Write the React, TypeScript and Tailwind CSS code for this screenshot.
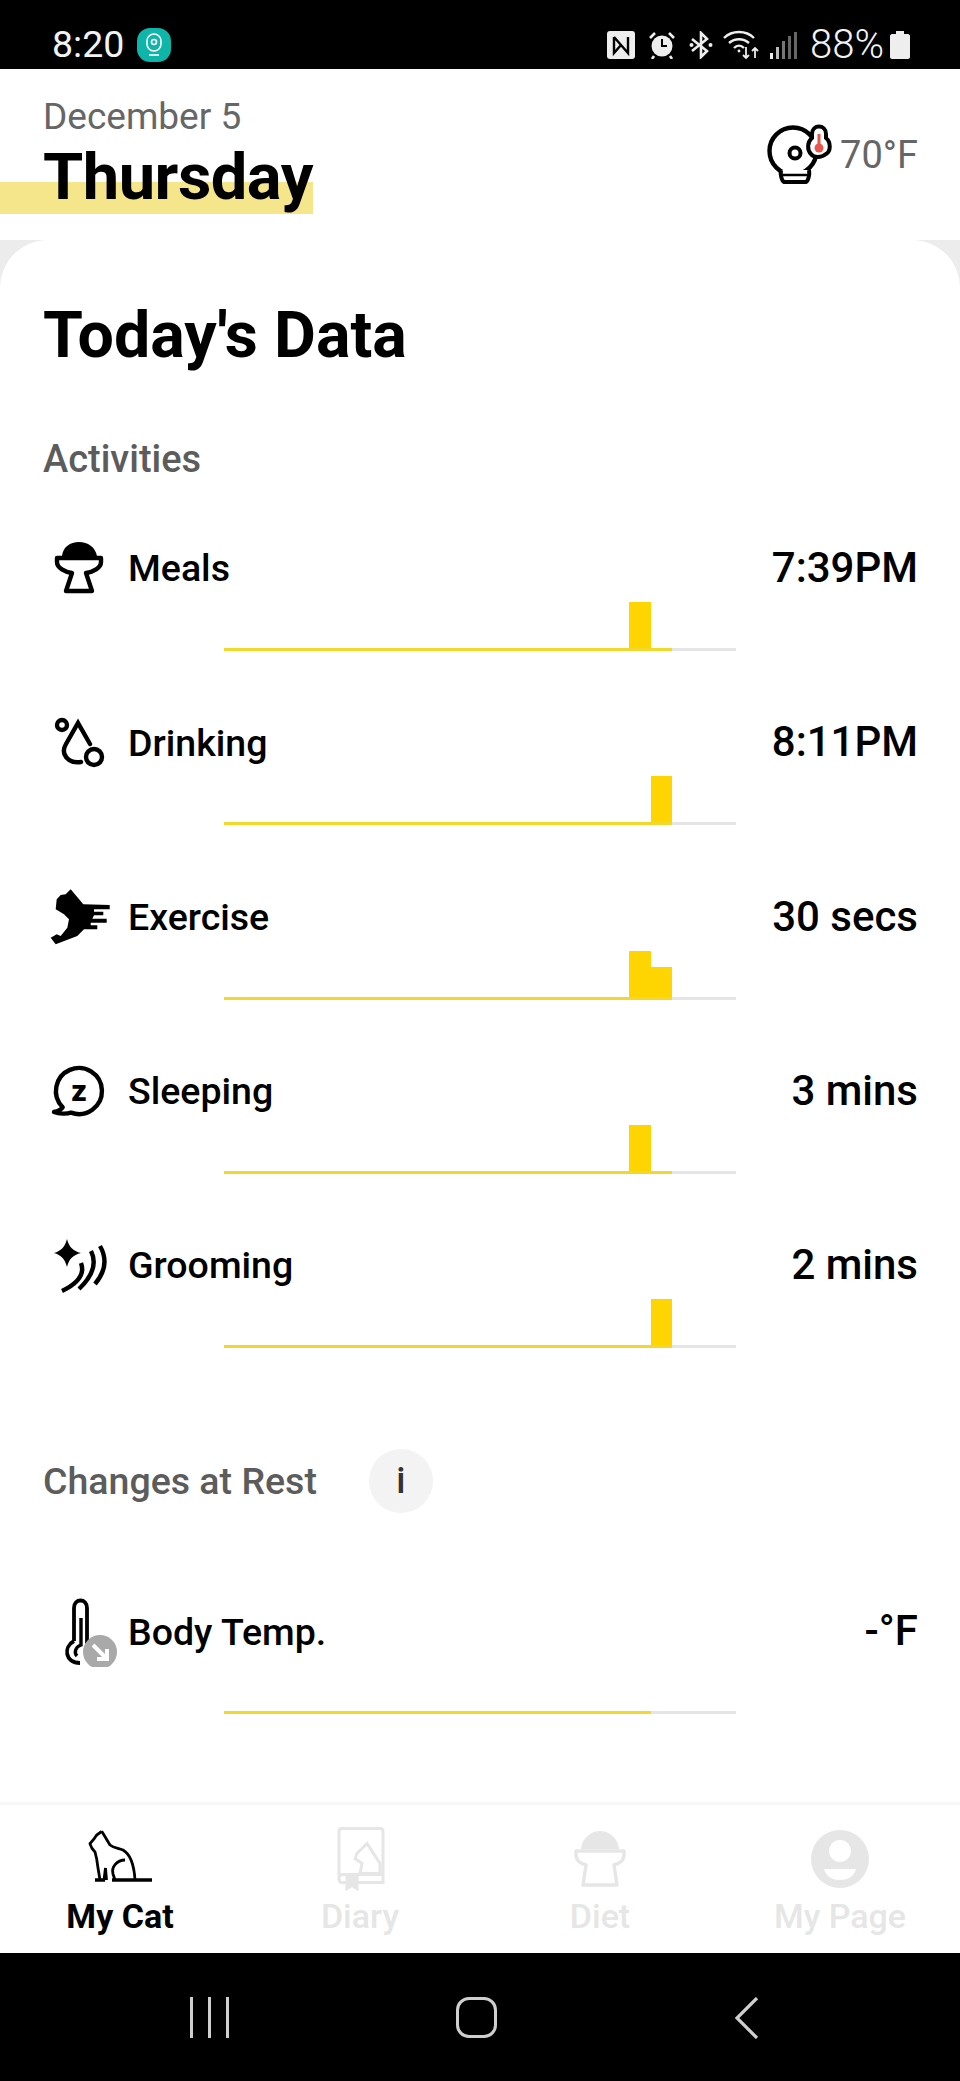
const HOURS = Array.from({ length: 24 }, (_, i) => i)

type Activity = {
  label: string
  value: string
  icon: React.ReactNode
  bars: Record<number, number>
  filled: number
}

function MealsIcon() {
  return (
    <svg width="85" height="70" viewBox="0 0 85 70" className="shrink-0">
      <path d="M19 22 C20 13 27 8 36 8 C45 8 52 13 54 22 Z" fill="#000" />
      <path d="M14 24 H58 V28 C58 34 50 38 43 39 L49 57 H23 L29 39 C22 38 14 34 14 28 Z" fill="none" stroke="#000" strokeWidth="4.4" strokeLinejoin="round" />
    </svg>
  )
}

function DrinkingIcon() {
  return (
    <svg width="85" height="70" viewBox="0 0 85 70" className="shrink-0" fill="none" stroke="#000" strokeWidth="4.4">
      <circle cx="19" cy="17" r="5" />
      <path d="M47 36 L35 15 L23 36 C17 46 25 56 38 54" strokeLinecap="round" />
      <circle cx="51" cy="49" r="8" />
    </svg>
  )
}

function ExerciseIcon() {
  return (
    <svg width="85" height="70" viewBox="0 0 85 70" className="shrink-0">
      <path d="M27.7 6.3 L40.3 21.3 L66.7 22 V26.3 H51 V28.7 H60.3 V32.3 H51 L49.3 35.7 H63.7 V39.7 H47.7 V42.3 H54.3 V46.3 H41 L34.3 53 L12.7 61.3 L7.7 54.7 L13.7 51.3 L17.7 53 L24.3 44.7 L26 36.3 L21 31.3 L12.7 26.3 L13.7 16.3 L17.7 12 L22.7 11.3 Z" fill="#000" />
    </svg>
  )
}

function SleepingIcon() {
  return (
    <svg width="85" height="70" viewBox="0 0 85 70" className="shrink-0">
      <path d="M19.7 50.3 A23 23 0 1 1 28 55.6 C24 57 16 57 11 55 C15 54 18 53 19.7 50.3 Z" fill="none" stroke="#000" strokeWidth="4.4" strokeLinejoin="round" />
      <text x="36" y="44" textAnchor="middle" fontFamily="Roboto, sans-serif" fontWeight="900" fontSize="30" fill="#000">z</text>
    </svg>
  )
}

function GroomingIcon() {
  return (
    <svg width="85" height="70" viewBox="0 0 85 70" className="shrink-0" fill="none" stroke="#000" strokeWidth="4.4">
      <path d="M24 8 C26 16 30 20 38 22 C30 24 26 28 24 36 C22 28 18 24 11 22 C18 20 22 16 24 8 Z" fill="#000" stroke="none" />
      <path d="M57 15 Q68 34 52 53" />
      <path d="M48 20 Q57 38 36 58" />
      <path d="M38 32 Q44 48 19 60" />
    </svg>
  )
}

function BodyTempIcon() {
  return (
    <svg width="85" height="70" viewBox="0 0 85 70" className="shrink-0" fill="none">
      <path d="M31 44 V11 C31 1 44 1 44 11 V50" stroke="#000" strokeWidth="3.8" />
      <path d="M31 44 C20 50 22 66 37 66" stroke="#000" strokeWidth="3.8" />
      <path d="M38 21 V48 C32 50 31 56 34 59" stroke="#000" strokeWidth="3.4" />
      <circle cx="57" cy="55" r="17" fill="#a9a9a9" />
      <path d="M50 48 L64 62 M64 52 V62 H54" stroke="#fff" strokeWidth="4" />
    </svg>
  )
}

function CameraTempIcon() {
  return (
    <svg width="80" height="75" viewBox="0 0 80 75" className="shrink-0" fill="none">
      <circle cx="35" cy="36" r="23.5" stroke="#000" strokeWidth="4.4" />
      <path d="M23 55 C22 60 24 66 26 67 H48 C50 66 52 60 51 55" fill="#fff" stroke="#000" strokeWidth="4" />
      <path d="M24 60 H50" stroke="#000" strokeWidth="2.5" />
      <circle cx="37" cy="38" r="5.5" stroke="#000" strokeWidth="4" />
      <path d="M54 23 V19 C54 9 68 9 68 19 V23 C73 27 73 36 68 39 C63 43 56 43 53 39 C49 35 49 27 54 23 Z" fill="#fff" stroke="#000" strokeWidth="4" />
      <path d="M61 19 V31" stroke="#e8574e" strokeWidth="3" />
      <circle cx="61" cy="33" r="4.5" fill="#e8574e" />
    </svg>
  )
}

function CatIcon() {
  return (
    <svg width="80" height="70" viewBox="0 2 80 70" fill="none" stroke="#000" strokeWidth="2.8" className="shrink-0">
      <path d="M21.7 9.3 L16.7 13 L14 17 L10 21.7 C11 26 13 28 15 30 L16.7 37 L18 46 L20 58" />
      <path d="M21.7 9.3 L24 13 L30 23 C34 26 38 26 43 28 C50 32 54 42 55 58" />
      <path d="M24 58 L25.5 46 L26.5 58" />
      <path d="M45 38 C37 38 31 45 33 52 L35 58" />
      <path d="M15 58 H25 M32 58 H72" strokeWidth="3.6" />
    </svg>
  )
}

function DiaryIcon() {
  return (
    <svg width="70" height="75" viewBox="0 1.5 70 75" fill="none" stroke="#e6e6e6" strokeWidth="3" className="shrink-0">
      <path d="M14 60 V11 Q14 8 17 8 H55 Q58 8 58 11 V62 H17 Q14 62 14 58 Q14 54 18 54 H58" />
      <path d="M42 23 L55 43 V53 H35 L37 43 L30 38 L32 33 Z" />
      <path d="M22 57 H32 V68 L27 65 L22 68 Z" fill="#e6e6e6" />
    </svg>
  )
}

function DietIcon() {
  return (
    <svg width="52" height="56" viewBox="0 0 52 56" className="shrink-0">
      <path d="M7 18 C8 7 17 0 26 0 C35 0 44 7 45 18 Z" fill="#e6e6e6" />
      <path d="M2 20 H50 V24 C50 30 44 33 40 34 L43 54 H9 L12 34 C8 33 2 30 2 24 Z" fill="none" stroke="#e6e6e6" strokeWidth="3.4" strokeLinejoin="round" />
    </svg>
  )
}

function MyPageIcon() {
  return (
    <svg width="58" height="58" viewBox="0 0 58 58" className="shrink-0">
      <circle cx="29" cy="29" r="29" fill="#e6e6e6" />
      <circle cx="29" cy="21" r="11" fill="#fff" />
      <path d="M13 39 H45 C43 47 36 50 29 50 C22 50 15 47 13 39 Z" fill="#fff" />
    </svg>
  )
}

function StatusIcons() {
  return (
    <div className="flex items-center">
      <svg width="28" height="28" viewBox="0 0 28 28" className="mr-[14px]">
        <rect width="28" height="28" rx="3" fill="#eee" />
        <path d="M7 6 V22 L14 14 L21 22 V6 M7 6 L21 22" fill="none" stroke="#000" strokeWidth="2.4" />
      </svg>
      <svg width="26" height="28" viewBox="0 0 26 28" className="mr-[14px]">
        <circle cx="13" cy="15" r="10.5" fill="#eee" />
        <path d="M13 8 V15 H18" fill="none" stroke="#000" strokeWidth="2" />
        <path d="M1 7 L6 2 M25 7 L20 2 M5 25 L3 28 M21 25 L23 28" stroke="#eee" strokeWidth="2.6" />
      </svg>
      <svg width="24" height="28" viewBox="0 0 24 28" className="mr-[10px]">
        <path d="M3 8 L18 20 L12 26 V2 L18 8 L3 20" fill="none" stroke="#eee" strokeWidth="2.6" />
        <circle cx="2.5" cy="14" r="2" fill="#eee" />
        <circle cx="21.5" cy="14" r="2" fill="#eee" />
      </svg>
      <svg width="36" height="30" viewBox="0 0 36 30" className="mr-[11px]" fill="none" stroke="#eee" strokeWidth="2.4">
        <path d="M1 8 C9 0 23 0 31 8" />
        <path d="M6 13 C12 8 20 8 26 13" />
        <path d="M11 18 C14 15 18 15 21 18" />
        <circle cx="16" cy="21" r="1.4" fill="#eee" stroke="none" />
        <path d="M23 17 V28 M20 25 L23 28 L26 25 M32 28 V18 M29 21 L32 18 L35 21" strokeWidth="1.8" />
      </svg>
      <div className="mr-[13px] flex h-[28px] items-end gap-[3px]">
        <div className="h-[6px] w-[3px] bg-[#eee]" />
        <div className="h-[12px] w-[3px] bg-[#bbb]" />
        <div className="h-[18px] w-[3px] bg-[#777]" />
        <div className="h-[23px] w-[3px] bg-[#666]" />
        <div className="h-[27px] w-[3px] bg-[#666]" />
      </div>
      <span className="mr-[6px] text-[40px] font-light leading-none text-[#f2f2f2]">88%</span>
      <svg width="20" height="28" viewBox="0 0 20 28">
        <path d="M6 0 H14 V3 H18 C19 3 20 4 20 5 V26 C20 27 19 28 18 28 H2 C1 28 0 27 0 26 V5 C0 4 1 3 2 3 H6 Z" fill="#eee" />
      </svg>
    </div>
  )
}

function DayChart({ bars, filled }: { bars: Record<number, number>; filled: number }) {
  return (
    <div className="ml-[181px] mt-[8px] w-[512px]">
      <div className="flex h-[46px] items-end">
        {HOURS.map(h => (
          <div key={h} className="flex h-full flex-1 items-end">
            {bars[h] ? <div className="w-full bg-[#ffd500]" style={{ height: bars[h] }} /> : null}
          </div>
        ))}
      </div>
      <div className="h-[3px] bg-[#e5e5e5]">
        <div className="h-full bg-[#f2d82c]" style={{ width: (filled / 24) * 100 + '%' }} />
      </div>
    </div>
  )
}

const activities: Activity[] = [
  { label: 'Meals', value: '7:39PM', icon: <MealsIcon />, bars: { 19: 46 }, filled: 21 },
  { label: 'Drinking', value: '8:11PM', icon: <DrinkingIcon />, bars: { 20: 46 }, filled: 21 },
  { label: 'Exercise', value: '30 secs', icon: <ExerciseIcon />, bars: { 19: 46, 20: 30 }, filled: 21 },
  { label: 'Sleeping', value: '3 mins', icon: <SleepingIcon />, bars: { 19: 46 }, filled: 21 },
  { label: 'Grooming', value: '2 mins', icon: <GroomingIcon />, bars: { 20: 46 }, filled: 21 },
]

function MetricRow({ icon, label, value }: { icon: React.ReactNode; label: string; value: string }) {
  return (
    <div className="flex h-[50px] items-center">
      {icon}
      <span className="flex-1 text-[37.5px] font-medium leading-none text-black">{label}</span>
      <span className="mb-[2px] text-[42px] font-medium leading-none text-black">{value}</span>
    </div>
  )
}

const tabs = [
  { label: 'My Cat', icon: <CatIcon />, active: true },
  { label: 'Diary', icon: <DiaryIcon />, active: false },
  { label: 'Diet', icon: <DietIcon />, active: false },
  { label: 'My Page', icon: <MyPageIcon />, active: false },
]

export default function App() {
  return (
    <div className="flex h-[2081px] w-[960px] flex-col bg-white font-['Roboto',sans-serif]">
      {/* Status bar */}
      <div className="flex h-[69px] shrink-0 items-center justify-between bg-black pl-[52px] pr-[50px] pt-[20px]">
        <div className="flex items-center gap-[13px]">
          <span className="text-[37.5px] leading-none text-[#f2f2f2]">8:20</span>
          <div className="flex h-[34px] w-[34px] items-center justify-center rounded-[13px] bg-[#0fb5a8]">
            <svg width="16" height="24" viewBox="0 0 16 24" fill="none" stroke="#fff" strokeWidth="1.6">
              <rect x="1" y="1" width="14" height="17" rx="7" />
              <circle cx="8" cy="9" r="2.5" />
              <path d="M3 22 H13" />
            </svg>
          </div>
        </div>
        <StatusIcons />
      </div>

      {/* Date header */}
      <div className="flex h-[171px] shrink-0 items-start justify-between pl-[43px] pr-[42px]">
        <div className="pt-[28px]">
          <div className="text-[37px] leading-[40px] text-[#666]">December 5</div>
          <div className="relative mt-[7px]">
            <div className="absolute left-[-43px] top-[38px] h-[32px] w-[313px] bg-[#f5e68c]" />
            <div className="relative text-[65px] font-bold leading-[66px] tracking-[-0.5px] text-black">Thursday</div>
          </div>
        </div>
        <div className="mt-[46px] flex items-center gap-[2px]">
          <CameraTempIcon />
          <span className="mt-[5px] text-[38px] leading-none text-[#666]">70°F</span>
        </div>
      </div>

      {/* Data card */}
      <div className="min-h-0 flex-1 bg-[#ececec]">
        <div className="h-full rounded-t-[48px] bg-white pl-[43px] pr-[42px] pt-[62px]">
          <h1 className="text-[64.5px] font-bold leading-[66px] text-black">Today's Data</h1>
          <h2 className="mt-[71px] text-[38px] font-medium leading-[40px] text-[#5c5c5c]">Activities</h2>
          <div className="mt-[65px]">
            {activities.map(a => (
              <div key={a.label} className="h-[174.25px]">
                <MetricRow icon={a.icon} label={a.label} value={a.value} />
                <DayChart bars={a.bars} filled={a.filled} />
              </div>
            ))}
          </div>
          <div className="mt-[34px] flex items-center">
            <h2 className="text-[37.5px] font-medium leading-[40px] text-[#5c5c5c]">Changes at Rest</h2>
            <div className="ml-[52px] flex h-[64px] w-[64px] items-center justify-center rounded-full bg-[#f3f3f3] text-[36px] font-medium text-[#333]">i</div>
          </div>
          <div className="mt-[94px]">
            <MetricRow icon={<BodyTempIcon />} label="Body Temp." value="-°F" />
            <DayChart bars={{}} filled={20} />
          </div>
        </div>
      </div>

      {/* Tab bar */}
      <div className="grid h-[151px] shrink-0 grid-cols-4 border-t-[3px] border-[#f6f6f6] bg-white">
        {tabs.map(t => (
          <div key={t.label} className="flex flex-col items-center">
            <div className="mt-[22px] flex h-[64px] items-center justify-center">{t.icon}</div>
            <span className={t.active ? 'mt-[6px] text-[34px] font-bold leading-[38px] text-black' : 'mt-[6px] text-[34px] font-medium leading-[38px] text-[#e6e6e6]'}>
              {t.label}
            </span>
          </div>
        ))}
      </div>

      {/* Navigation bar */}
      <div className="flex h-[128px] shrink-0 items-start bg-black pt-[44px]">
        <div className="ml-[190px] flex h-[41px] gap-[15px]">
          <div className="w-[3px] bg-[#cfcfcf]" />
          <div className="w-[3px] bg-[#cfcfcf]" />
          <div className="w-[3px] bg-[#cfcfcf]" />
        </div>
        <div className="ml-[227px] h-[41px] w-[41px] rounded-[13px] border-[3px] border-[#cfcfcf]" />
        <svg width="24" height="42" viewBox="0 0 24 42" className="ml-[238px]" fill="none" stroke="#cfcfcf" strokeWidth="3.2">
          <path d="M22 1 L2 21 L22 41" />
        </svg>
      </div>
    </div>
  )
}
